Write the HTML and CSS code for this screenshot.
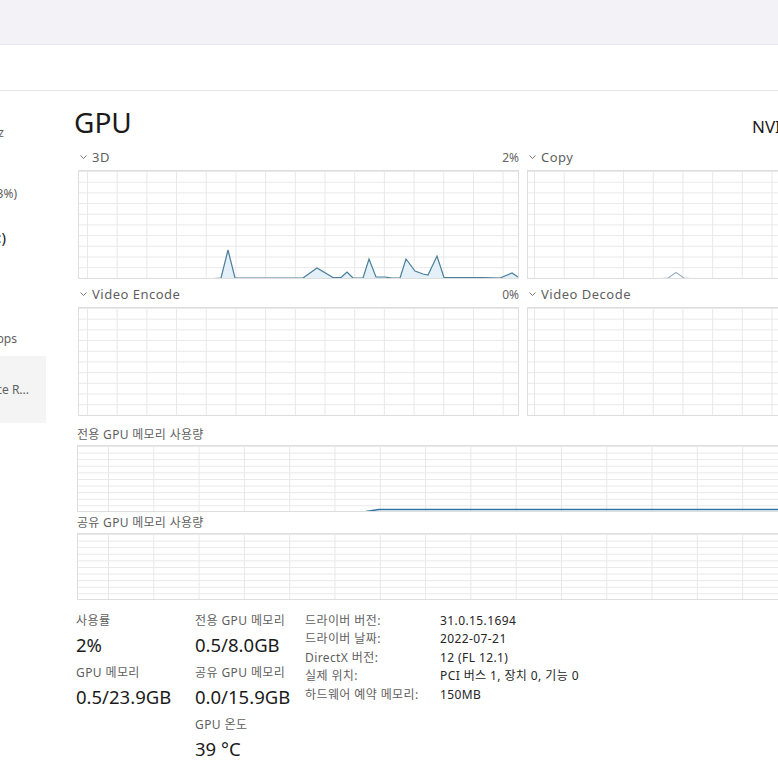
FILE: index.html
```html
<!DOCTYPE html>
<html lang="ko">
<head>
<meta charset="utf-8">
<title>작업 관리자 - GPU</title>
<link rel="stylesheet" href="styles.css">
</head>
<body>
<div class="app">
  <div class="titlebar"></div>
  <div class="toolbar"></div>
  <div class="body">
    <aside class="sidebar">
      <div class="side-item side-cpu">
        <div class="side-line side-title">CPU</div>
        <div class="side-line side-sub pr-42">5% 3.60GHz</div>
      </div>
      <div class="side-item side-mem">
        <div class="side-line side-title">메모리</div>
        <div class="side-line side-sub pr-29">8.4/15.9GB (53%)</div>
      </div>
      <div class="side-item side-disk">
        <div class="side-line side-title pr-40">디스크 0(C:)</div>
        <div class="side-line side-sub">SSD</div>
        <div class="side-line side-sub">1%</div>
      </div>
      <div class="side-item side-wifi">
        <div class="side-line side-title">Wi-Fi</div>
        <div class="side-line side-sub">Wi-Fi</div>
        <div class="side-line side-sub pr-29">S: 0 R: 0 Kbps</div>
      </div>
      <div class="side-item side-gpu is-selected">
        <div class="side-line side-title">GPU 0</div>
        <div class="side-line side-sub pr-17">NVIDIA GeForce R...</div>
        <div class="side-line side-sub">2% (39 °C)</div>
      </div>
    </aside>

    <main class="main">
      <div class="head">
        <h1 class="title">GPU</h1>
        <div class="gpu-name">NVIDIA GeForce RTX 3070</div>
      </div>

      <div class="engines">
        <section class="engine">
          <div class="engine-head">
            <span class="engine-name"><svg class="chev" viewBox="0 0 7 4"><polyline points="0.5,0.5 3.5,3.5 6.5,0.5"/></svg>3D</span>
            <span class="engine-pct">2%</span>
          </div>
          <div class="graph graph-engine">
            <svg class="plot" viewBox="79 171 439 107" preserveAspectRatio="none">
              <polygon class="fill" points="79,278.5 214,278.5 221,278 228,250 235,278 303,278 317,268 333,277.5 341,277.5 347,272 353,278 363,278 369,259 376,277 385,277 392,278 400,278 406,259 415,271 423,274 428,275 437,256 444,277.5 483,277.5 500,278 512,273 518,277 518,279 79,279"/>
              <polyline class="line" points="214,278.5 221,278 228,250 235,278 303,278 317,268 333,277.5 341,277.5 347,272 353,278 363,278 369,259 376,277 385,277 392,278 400,278 406,259 415,271 423,274 428,275 437,256 444,277.5 483,277.5 500,278 512,273 518,277"/>
            </svg>
          </div>
        </section>
        <section class="engine">
          <div class="engine-head">
            <span class="engine-name"><svg class="chev" viewBox="0 0 7 4"><polyline points="0.5,0.5 3.5,3.5 6.5,0.5"/></svg>Copy</span>
            <span class="engine-pct">0%</span>
          </div>
          <div class="graph graph-engine graph-right">
            <svg class="plot" viewBox="528 171 439 107" preserveAspectRatio="none">
              <polyline class="line line-faint" points="662,278.5 668,278 676,272.5 684,278 690,278.5"/>
            </svg>
          </div>
        </section>
        <section class="engine">
          <div class="engine-head">
            <span class="engine-name"><svg class="chev" viewBox="0 0 7 4"><polyline points="0.5,0.5 3.5,3.5 6.5,0.5"/></svg>Video Encode</span>
            <span class="engine-pct">0%</span>
          </div>
          <div class="graph graph-engine"></div>
        </section>
        <section class="engine">
          <div class="engine-head">
            <span class="engine-name"><svg class="chev" viewBox="0 0 7 4"><polyline points="0.5,0.5 3.5,3.5 6.5,0.5"/></svg>Video Decode</span>
            <span class="engine-pct">0%</span>
          </div>
          <div class="graph graph-engine graph-right"></div>
        </section>
      </div>

      <section class="mem">
        <div class="mem-label">전용 GPU 메모리 사용량</div>
        <div class="graph graph-mem">
          <svg class="plot" viewBox="78 446 889 65" preserveAspectRatio="none">
            <polyline class="line line-mem" points="366,511.5 379,509.5 967,509.5"/>
          </svg>
        </div>
      </section>
      <section class="mem mem-second">
        <div class="mem-label">공유 GPU 메모리 사용량</div>
        <div class="graph graph-mem"></div>
      </section>

      <div class="stats">
        <div class="stat-col stat-col-1">
          <div class="stat">
            <div class="stat-label">사용률</div>
            <div class="stat-value">2%</div>
          </div>
          <div class="stat">
            <div class="stat-label">GPU 메모리</div>
            <div class="stat-value">0.5/23.9GB</div>
          </div>
        </div>
        <div class="stat-col stat-col-2">
          <div class="stat">
            <div class="stat-label">전용 GPU 메모리</div>
            <div class="stat-value">0.5/8.0GB</div>
          </div>
          <div class="stat">
            <div class="stat-label">공유 GPU 메모리</div>
            <div class="stat-value">0.0/15.9GB</div>
          </div>
          <div class="stat">
            <div class="stat-label">GPU 온도</div>
            <div class="stat-value">39 °C</div>
          </div>
        </div>
        <dl class="props">
          <dt>드라이버 버전:</dt><dd>31.0.15.1694</dd>
          <dt>드라이버 날짜:</dt><dd>2022-07-21</dd>
          <dt>DirectX 버전:</dt><dd>12 (FL 12.1)</dd>
          <dt>실제 위치:</dt><dd>PCI 버스 1, 장치 0, 기능 0</dd>
          <dt>하드웨어 예약 메모리:</dt><dd>150MB</dd>
        </dl>
      </div>
    </main>
  </div>
</div>
</body>
</html>
```

FILE: styles.css
```css
* { box-sizing: border-box; }

html, body {
  margin: 0;
  padding: 0;
  background: #ffffff;
}

body {
  font-family: "Noto Sans", "Noto Sans CJK KR", sans-serif;
  color: #1b1b1b;
}

.app {
  width: 778px;
  height: 778px;
  overflow: hidden;
  background: #ffffff;
}

.titlebar {
  height: 45px;
  background: #f3f2f7;
  border-bottom: 1px solid #e9e8ee;
}

.toolbar {
  height: 46px;
  background: #ffffff;
  border-bottom: 1px solid #e6e6e6;
}

.body {
  display: flex;
  align-items: flex-start;
}

/* ---------- sidebar ---------- */
.sidebar {
  flex: 0 0 46px;
  width: 46px;
  padding-top: 8px;
  overflow: hidden;
}

.side-item {
  padding-top: 7px;
  overflow: hidden;
}

.side-cpu { height: 61px; }
.side-mem { height: 61px; }
.side-disk { height: 66px; }
.side-wifi { height: 69px; }
.side-gpu { height: 67px; }

.side-item.is-selected {
  background: #f4f4f4;
}

.side-line {
  display: flex;
  justify-content: flex-end;
  overflow: hidden;
  white-space: nowrap;
  height: 18px;
  line-height: 18px;
  padding-right: 60px;
}

.side-title {
  font-size: 15px;
  color: #1b1b1b;
}

.side-sub {
  font-size: 12px;
  color: #616161;
}

.pr-42 { padding-right: 42px; }
.pr-40 { padding-right: 40px; }
.pr-29 { padding-right: 29px; }
.pr-17 { padding-right: 17px; }

/* ---------- main ---------- */
.main {
  flex: 0 0 auto;
  width: 940px;
  padding: 14px 0 0 28px;
}

.head {
  display: grid;
  grid-template-columns: 678px auto;
  align-items: baseline;
  height: 34px;
}

.title {
  margin: 0;
  font-size: 28px;
  font-weight: 400;
  line-height: 34px;
  color: #1b1b1b;
}

.gpu-name {
  font-size: 17px;
  line-height: 20px;
  color: #1b1b1b;
  white-space: nowrap;
}

.engines {
  margin: 9px 0 0 4px;
  display: grid;
  grid-template-columns: 441px 441px;
  column-gap: 8px;
  row-gap: 6px;
}

.engine-head {
  display: flex;
  justify-content: space-between;
  align-items: center;
  height: 18px;
  margin-bottom: 4px;
  font-size: 13px;
  color: #5f5f5f;
}

.engine-name {
  display: flex;
  align-items: center;
  letter-spacing: 0.5px;
}

.engine-pct {
  font-size: 12px;
  color: #666666;
}

.chev {
  width: 7px;
  height: 4px;
  margin: 0 5px 0 2px;
  fill: none;
  stroke: #777777;
  stroke-width: 1;
}

.graph {
  border: 1px solid #dedede;
  background-color: #ffffff;
  background-image:
    linear-gradient(90deg, #e8e8e8 1px, transparent 1px),
    linear-gradient(180deg, #e8e8e8 1px, transparent 1px);
}

.graph-engine {
  height: 109px;
  background-size: 29.7px 100%, 100% 10.7px;
  background-position: 8px 0, 0 0;
}

.graph-right {
  background-position: 6px 0, 0 0;
}

.plot {
  display: block;
  width: 100%;
  height: 100%;
}

.plot .fill {
  fill: #e3f0f7;
  stroke: none;
}

.plot .line {
  fill: none;
  stroke: #4a7e9a;
  stroke-width: 1.2;
  vector-effect: non-scaling-stroke;
}

.plot .line-faint {
  stroke: #9fb3bf;
}

.plot .line-mem {
  stroke: #2d73a3;
  stroke-width: 1.5;
}

.mem {
  margin: 10px 0 0 3px;
  width: 891px;
}

.mem-second {
  margin-top: 2px;
}

.mem-label {
  height: 18px;
  line-height: 18px;
  margin-bottom: 1px;
  font-size: 12px;
  letter-spacing: 0.3px;
  color: #5f5f5f;
}

.graph-mem {
  height: 67px;
  background-size: 45.3px 100%, 100% 6.6px;
  background-position: 30px 0, 0 0;
}

/* ---------- stats ---------- */
.stats {
  display: flex;
  margin-top: 12px;
  padding-left: 2px;
}

.stat-col-1 { width: 119px; }
.stat-col-2 { width: 110px; }

.stat + .stat {
  margin-top: 7px;
}

.stat-label {
  height: 18px;
  line-height: 18px;
  font-size: 12px;
  letter-spacing: 0.4px;
  color: #5f5f5f;
  white-space: nowrap;
}

.stat-value {
  margin-top: 3px;
  height: 24px;
  line-height: 24px;
  font-size: 18.5px;
  color: #1b1b1b;
  white-space: nowrap;
}

.props {
  margin: 0;
  display: grid;
  grid-template-columns: 135px auto;
  grid-auto-rows: 18.4px;
  font-size: 12px;
  line-height: 18px;
  letter-spacing: 0.4px;
}

.props dt,
.props dd {
  height: 18.4px;
  white-space: nowrap;
}

.props dt {
  color: #5f5f5f;
}

.props dd {
  margin: 0;
  color: #262626;
}
```
